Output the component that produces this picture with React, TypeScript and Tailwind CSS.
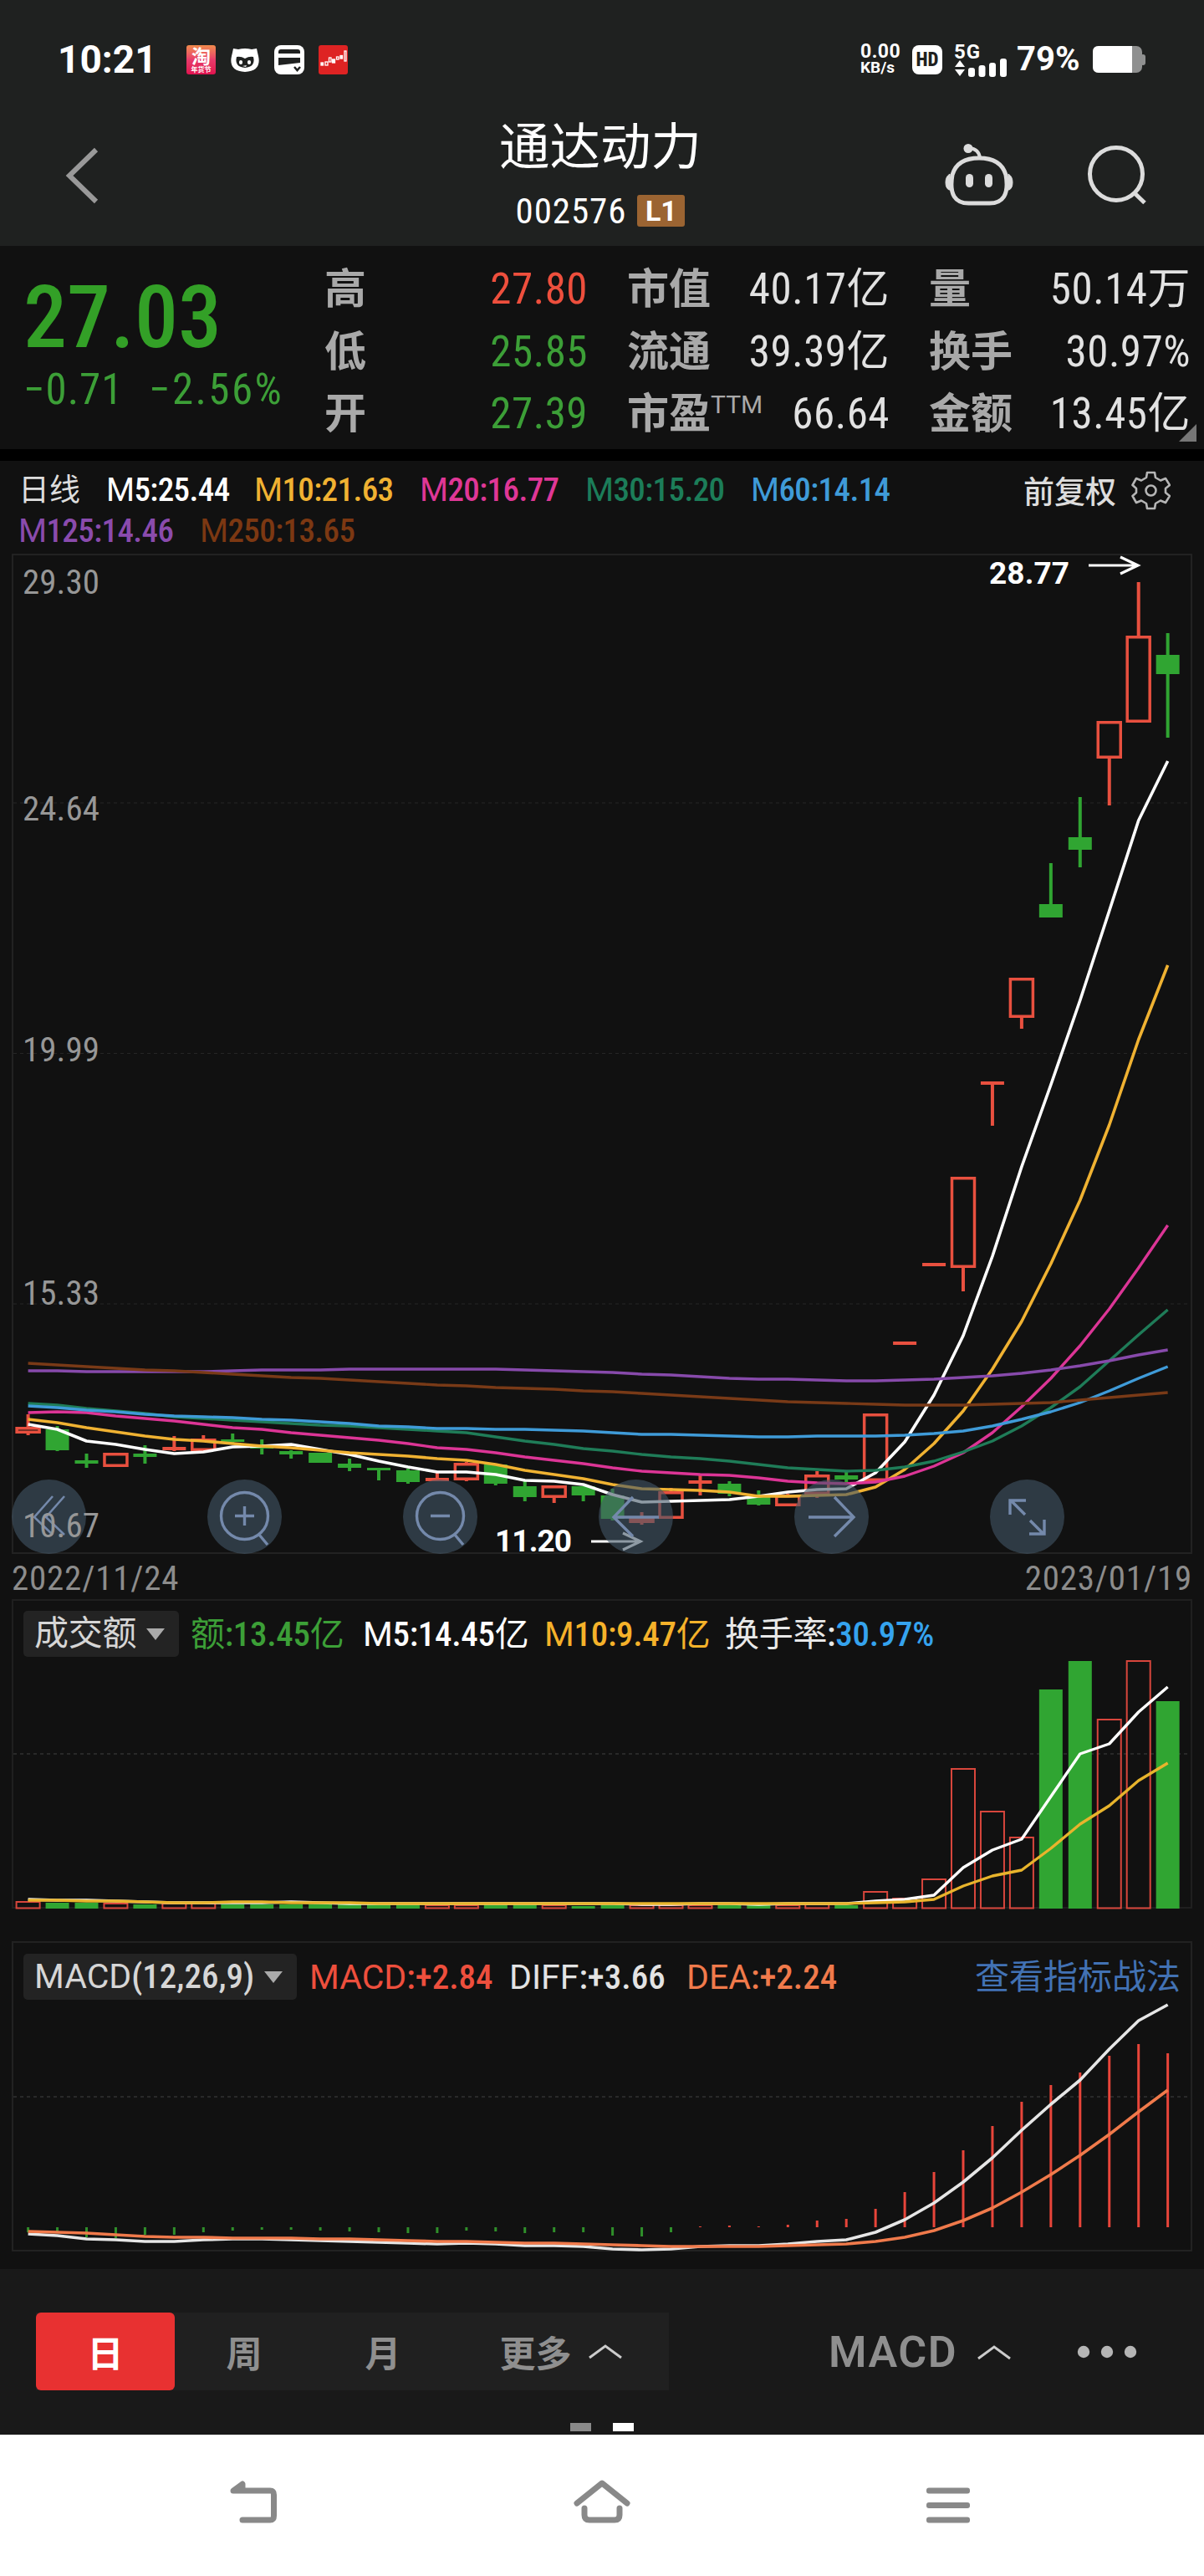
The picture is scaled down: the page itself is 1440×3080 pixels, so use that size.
import { ReactNode } from 'react';

const RED = '#e8503f';
const GREEN = '#30a532';

// x centre of the n-th trading day
const X0 = 33.6;
const STEP = 34.95;
const cx = (i: number) => X0 + i * STEP;

// [high, bodyTop, bodyBottom, low, up?]
type Candle = [number, number, number, number, boolean];

const candles: Candle[] = [
  [1691, 1706, 1714, 1716, true],
  [1705, 1709, 1734, 1735, false],
  [1738, 1746, 1750, 1755, false],
  [1737, 1737, 1754, 1754, true],
  [1728, 1738, 1742, 1750, false],
  [1717, 1730, 1734, 1735, true],
  [1716, 1720, 1735, 1735, true],
  [1714, 1721, 1723, 1725, false],
  [1721, 1729, 1730, 1739, false],
  [1734, 1735, 1739, 1744, false],
  [1737, 1737, 1749, 1749, false],
  [1744, 1750, 1755, 1759, false],
  [1755, 1755, 1758, 1770, false],
  [1756, 1758, 1772, 1774, false],
  [1760, 1767, 1771, 1771, true],
  [1748, 1749, 1770, 1771, true],
  [1751, 1751, 1774, 1776, false],
  [1771, 1777, 1790, 1795, false],
  [1776, 1776, 1791, 1797, true],
  [1777, 1777, 1788, 1795, false],
  [1780, 1788, 1816, 1818, false],
  [1808, 1814, 1821, 1823, true],
  [1779, 1783, 1816, 1816, true],
  [1762, 1770, 1774, 1788, true],
  [1771, 1774, 1786, 1789, false],
  [1782, 1789, 1799, 1800, false],
  [1786, 1787, 1801, 1801, true],
  [1759, 1763, 1787, 1791, true],
  [1760, 1764, 1769, 1772, false],
  [1690, 1690, 1771, 1771, true],
  [1604, 1604, 1608, 1608, true],
  [1510, 1510, 1514, 1514, true],
  [1407, 1407, 1516, 1544, true],
  [1293, 1293, 1297, 1346, true],
  [1169, 1169, 1217, 1230, true],
  [1032, 1081, 1097, 1097, false],
  [953, 1001, 1016, 1037, false],
  [862, 862, 907, 963, true],
  [696, 760, 864, 864, true],
  [757, 783, 806, 882, false],
];

const ma5 = [
  1703, 1709, 1723, 1727, 1733, 1738, 1736, 1730, 1729, 1727, 1733, 1739, 1747, 1754, 1760, 1760, 1763, 1770, 1771, 1775,
  1787, 1796, 1795, 1794, 1793, 1789, 1784, 1781, 1780, 1761, 1724, 1668, 1597, 1502, 1395, 1297, 1196, 1089, 981, 910,
];
const ma10 = [
  1697, 1701, 1707, 1712, 1717, 1721, 1723, 1726, 1729, 1731, 1734, 1737, 1739, 1741, 1744, 1746, 1751, 1758, 1763, 1768,
  1775, 1780, 1781, 1782, 1784, 1789, 1789, 1788, 1787, 1778, 1757, 1726, 1687, 1637, 1580, 1511, 1435, 1345, 1243, 1154,
];
const ma20 = [
  1689, 1688, 1689, 1693, 1696, 1699, 1703, 1707, 1709, 1713, 1716, 1719, 1722, 1726, 1731, 1733, 1737, 1742, 1746, 1750,
  1755, 1759, 1761, 1763, 1764, 1767, 1771, 1773, 1774, 1772, 1765, 1753, 1737, 1713, 1682, 1648, 1609, 1565, 1516, 1465,
];
const ma30 = [
  1678, 1680, 1684, 1687, 1690, 1694, 1696, 1698, 1700, 1702, 1704, 1705, 1707, 1709, 1711, 1713, 1718, 1723, 1727, 1732,
  1735, 1739, 1742, 1744, 1747, 1751, 1755, 1757, 1759, 1758, 1754, 1747, 1736, 1723, 1705, 1683, 1658, 1627, 1596, 1566,
];
const ma60 = [
  1681, 1683, 1686, 1688, 1691, 1693, 1694, 1695, 1697, 1698, 1700, 1702, 1705, 1706, 1708, 1708, 1709, 1709, 1710, 1711,
  1713, 1715, 1715, 1716, 1717, 1718, 1718, 1717, 1717, 1717, 1716, 1714, 1711, 1705, 1697, 1688, 1677, 1663, 1648, 1634,
];
const ma125 = [
  1639, 1639, 1640, 1640, 1640, 1640, 1640, 1639, 1638, 1638, 1638, 1637, 1637, 1637, 1637, 1637, 1637, 1638, 1639, 1640,
  1641, 1643, 1644, 1646, 1648, 1649, 1649, 1650, 1651, 1651, 1650, 1649, 1647, 1645, 1642, 1638, 1633, 1627, 1620, 1614,
];
const ma250 = [
  1630, 1632, 1634, 1636, 1638, 1639, 1641, 1643, 1645, 1647, 1648, 1650, 1652, 1654, 1656, 1657, 1659, 1660, 1661, 1663,
  1664, 1666, 1668, 1670, 1672, 1674, 1676, 1677, 1678, 1679, 1680, 1680, 1680, 1679, 1678, 1677, 1674, 1671, 1668, 1665,
];

const volumeTops = [
  2274, 2275, 2275, 2276, 2277, 2276, 2276, 2277, 2277, 2277, 2277, 2277, 2277, 2277, 2278, 2278, 2277, 2277, 2278, 2279,
  2278, 2278, 2278, 2278, 2278, 2278, 2278, 2277, 2278, 2262, 2270, 2247, 2115, 2166, 2197, 2020, 1986, 2056, 1986, 2034,
];
const volMa5 = [
  2271, 2272, 2272, 2273, 2274, 2275, 2275, 2275, 2275, 2274, 2275, 2276, 2276, 2276, 2276, 2276, 2276, 2276, 2276, 2276,
  2276, 2277, 2277, 2276, 2276, 2277, 2276, 2276, 2276, 2273, 2271, 2266, 2233, 2212, 2199, 2148, 2097, 2085, 2047, 2017,
];
const volMa10 = [
  2272, 2272, 2273, 2273, 2274, 2275, 2275, 2274, 2274, 2275, 2275, 2275, 2276, 2276, 2276, 2276, 2276, 2276, 2276, 2276,
  2276, 2276, 2276, 2276, 2276, 2276, 2276, 2276, 2276, 2275, 2274, 2271, 2255, 2243, 2236, 2210, 2181, 2159, 2129, 2108,
];

const macdEnds = [
  2669, 2670, 2675, 2676, 2672, 2672, 2669, 2667, 2666, 2666, 2667, 2668, 2669, 2670, 2670, 2667, 2668, 2670, 2669, 2669,
  2673, 2674, 2669, 2662, 2661, 2662, 2660, 2655, 2653, 2641, 2621, 2597, 2571, 2542, 2513, 2493, 2478, 2458, 2444, 2455,
];
const diff = [
  2671, 2673, 2677, 2678, 2680, 2680, 2678, 2677, 2677, 2678, 2679, 2680, 2681, 2682, 2683, 2682, 2683, 2685, 2685, 2686,
  2689, 2690, 2689, 2686, 2685, 2685, 2683, 2680, 2678, 2669, 2654, 2634, 2609, 2580, 2547, 2516, 2487, 2450, 2416, 2397,
];
const dea = [
  2668, 2669, 2670, 2672, 2674, 2675, 2675, 2676, 2676, 2676, 2677, 2677, 2678, 2679, 2680, 2680, 2681, 2682, 2682, 2683,
  2684, 2685, 2686, 2686, 2686, 2686, 2685, 2684, 2683, 2680, 2675, 2667, 2655, 2640, 2621, 2600, 2577, 2552, 2525, 2499,
];

function Line({ ys, color, width = 3 }: { ys: number[]; color: string; width?: number }) {
  return (
    <polyline
      points={ys.map((y, i) => `${cx(i)},${y}`).join(' ')}
      fill="none"
      stroke={color}
      strokeWidth={width}
      strokeLinejoin="round"
    />
  );
}

function CandleShape({ data, i }: { data: Candle; i: number }) {
  const [high, top, bottom, low, up] = data;
  const x = cx(i);
  const h = Math.max(bottom - top, 3);
  const color = up ? RED : GREEN;
  return (
    <g fill={color}>
      {high < top && <rect x={x - 2} y={high} width={4} height={top - high} />}
      {low > bottom && <rect x={x - 2} y={bottom} width={4} height={low - bottom} />}
      {up && h > 6 ? (
        <rect x={x - 13.5} y={top + 1.75} width={27} height={h - 3.5} fill="none" stroke={color} strokeWidth={3.5} />
      ) : (
        <rect x={x - 14} y={top} width={28} height={h} />
      )}
    </g>
  );
}

function StatusBar() {
  return (
    <div className="flex h-[142px] items-center pl-[69px] pr-[70px] text-white">
      <span className="w-[154px] font-['Roboto'] text-[46px] font-bold leading-none">10:21</span>
      <div className="flex items-center gap-[17px]">
        <div className="flex h-[35px] w-[35px] flex-col items-center rounded-[3px] bg-linear-to-b from-[#f08a4b] via-[#e83a6a] to-[#e0104f] font-['Noto_Sans_CJK_SC'] font-bold">
          <span className="text-[23px] leading-[24px]">淘</span>
          <span className="text-[8px] leading-[9px] whitespace-nowrap">年货节</span>
        </div>
        <svg width="36" height="35" viewBox="0 0 36 35">
          <path d="M4 4 L10 5 Q18 3 26 5 L32 4 Q33 9 34 13 Q38 31 18 32 Q-2 31 2 13 Q3 9 4 4Z" fill="#fff" />
          <path d="M8 14 Q13 13 18 16 Q23 13 28 14 Q31 26 18 27 Q5 26 8 14Z" fill="#1f2120" />
          <rect x="11" y="18" width="4" height="5" rx="2" fill="#fff" />
          <rect x="21" y="18" width="4" height="5" rx="2" fill="#fff" />
          <path d="M15 25 l5 -1 l-1 2z" fill="#fff" />
        </svg>
        <svg width="36" height="35" viewBox="0 0 36 35">
          <rect width="36" height="35" rx="8" fill="#fff" />
          <path d="M5 10 V8 Q5 5 8 5 H28 Q31 5 31 8 V10Z" fill="#1f2120" />
          <path d="M5 15 H31 V21 L5 24Z" fill="#1f2120" />
          <path d="M24 26 l3.5 4 l3.5 -4" fill="none" stroke="#1f2120" strokeWidth="2.5" />
        </svg>
        <svg width="35" height="35" viewBox="0 0 35 35">
          <rect width="35" height="35" rx="3" fill="#de2323" />
          <g stroke="#fff" strokeWidth="1.3" fill="#fff">
            <rect x="3" y="21" width="2.5" height="3" />
            <rect x="8" y="20" width="3" height="4" fill="none" />
            <rect x="12.5" y="15" width="2.5" height="5" fill="none" />
            <rect x="16.5" y="17" width="3" height="4" />
            <rect x="21.5" y="14" width="2.5" height="3" fill="none" />
            <rect x="26" y="12.5" width="2.5" height="3.5" />
            <rect x="31" y="7" width="2" height="12" fill="none" />
          </g>
        </svg>
      </div>
      <div className="flex-1" />
      <div className="flex w-[62px] flex-col font-['Roboto'] font-bold">
        <span className="text-[23px] leading-[20px] tracking-[0.5px]">0.00</span>
        <span className="text-[19px] leading-[18px]">KB/s</span>
      </div>
      <div className="mr-[14px] flex h-[35px] w-[36px] items-center justify-center rounded-[8px] bg-white font-['Roboto_Condensed'] text-[23px] font-extrabold leading-none text-[#1f2120]">
        HD
      </div>
      <svg width="66" height="44" viewBox="0 0 66 44" className="mr-[9px] mb-[3px]">
        <text x="0" y="21.5" className="font-['Roboto'] font-bold" fontSize="24" textLength="31" fill="#fff">5G</text>
        <g fill="#fff">
          <path d="M7 24 l6 8 h-12z M1 35 h12 l-6 8z" />
          <rect x="17" y="33" width="8" height="11" rx="3" />
          <rect x="29.5" y="30" width="8" height="14" rx="3" />
          <rect x="42" y="27" width="8" height="17" rx="3" />
          <rect x="55" y="22" width="8" height="22" rx="3" />
        </g>
      </svg>
      <span className="mr-[8px] w-[83px] font-['Roboto'] text-[40px] font-bold leading-none">79%</span>
      <svg width="63" height="32" viewBox="0 0 63 32">
        <rect width="59" height="32" rx="7" fill="#8f9090" />
        <rect x="57" y="10" width="6" height="13" rx="3" fill="#8f9090" />
        <path d="M7 0 H47 V32 H7 Q0 32 0 25 V7 Q0 0 7 0Z" fill="#fff" />
      </svg>
    </div>
  );
}

function TitleBar() {
  return (
    <div className="flex h-[152px] items-start pr-[68px] pl-[76px]">
      <svg width="42" height="72" viewBox="0 0 42 72" className="mt-[32px]">
        <path d="M39 5 L7 36 L39 67" fill="none" stroke="#999" strokeWidth="6" />
      </svg>
      <div className="ml-[475px] flex w-[250px] flex-col items-center text-white">
        <h1 className="font-['Noto_Sans_CJK_SC'] text-[60.5px] leading-[58px]">通达动力</h1>
        <div className="mt-[33px] flex items-center gap-[13px]">
          <span className="font-['Roboto_Condensed'] text-[43px] leading-[38px] tracking-[0.9px]">002576</span>
          <span className="flex h-[38px] w-[57px] items-center justify-center rounded-[3px] bg-[#9b6432] font-['Roboto'] text-[34px] font-bold leading-none">
            L1
          </span>
        </div>
      </div>
      <div className="flex-1" />
      <svg width="82" height="74" viewBox="0 0 82 74" className="mt-[30px] mr-[88px]" fill="none" stroke="#dcdcdc">
        <path d="M41 17 Q67 17 73 37 Q79 72 52 71 H30 Q3 72 9 37 Q15 17 41 17Z" strokeWidth="5" />
        <path d="M42 17 Q41 6 29 5" strokeWidth="4" />
        <circle cx="28" cy="5.5" r="5.5" fill="#dcdcdc" stroke="none" />
        <rect x="25" y="36" width="9" height="16" rx="4.5" fill="#dcdcdc" stroke="none" />
        <rect x="48" y="36" width="9" height="16" rx="4.5" fill="#dcdcdc" stroke="none" />
        <path d="M6 36 Q1 39 1 46 Q1 53 5 55 L7 55 L6 36Z M76 36 Q81 39 81 46 Q81 53 77 55 L75 55Z" fill="#dcdcdc" strokeWidth="1" />
      </svg>
      <svg width="72" height="72" viewBox="0 0 72 72" className="mt-[31px]" fill="none" stroke="#dcdcdc" strokeWidth="5">
        <circle cx="35" cy="35" r="31.5" />
        <path d="M57 58 L69 69.5" />
      </svg>
    </div>
  );
}

const stats: { label: ReactNode; value: string; color: string }[][] = [
  [
    { label: '高', value: '27.80', color: 'text-[#ee4f3d]' },
    { label: '市值', value: '40.17亿', color: 'text-[#e2e2e2]' },
    { label: '量', value: '50.14万', color: 'text-[#e2e2e2]' },
  ],
  [
    { label: '低', value: '25.85', color: 'text-[#3c9f37]' },
    { label: '流通', value: '39.39亿', color: 'text-[#e2e2e2]' },
    { label: '换手', value: '30.97%', color: 'text-[#e2e2e2]' },
  ],
  [
    { label: '开', value: '27.39', color: 'text-[#3c9f37]' },
    {
      label: (
        <>
          市盈<span className="self-start font-['Roboto'] text-[30px] font-normal leading-[28px]">TTM</span>
        </>
      ),
      value: '66.64',
      color: 'text-[#e2e2e2]',
    },
    { label: '金额', value: '13.45亿', color: 'text-[#e2e2e2]' },
  ],
];

function Quote() {
  return (
    <section className="relative flex h-[243px] bg-[#111] font-['Roboto_Condensed','Noto_Sans_CJK_SC',sans-serif]">
      <div className="flex w-[388px] flex-col pl-[28px] pt-[34px] text-[#33a027]">
        <span className="text-[104px] font-medium leading-[104px]">27.03</span>
        <div className="mt-[8px] flex text-[51px] leading-[51px] text-[#3c9f37]">
          <span className="w-[150px] tracking-[1px]">−0.71</span>
          <span className="tracking-[2.4px]">−2.56%</span>
        </div>
      </div>
      <div className="grid grid-cols-[315px_47px_314px_47px_313px] content-start pt-[15px]">
        {stats.map((row, r) =>
          row.map((s, c) => (
            <div
              key={`${r}-${c}`}
              className="flex h-[74.5px] items-center justify-between text-[51px] leading-[74px]"
              style={{ gridColumn: c * 2 + 1 }}
            >
              <span className="flex h-[50px] items-center text-[50px] font-bold leading-[50px] text-[#a9a9a9]">{s.label}</span>
              <span className={`${s.color} tracking-[0.5px]`}>{s.value}</span>
            </div>
          ))
        )}
      </div>
      <svg width="21" height="21" viewBox="0 0 21 21" className="absolute right-[9px] bottom-[9px]">
        <path d="M21 0 V21 H0Z" fill="#777" />
      </svg>
    </section>
  );
}

function Ma({ name, value, className }: { name: string; value: string; className: string }) {
  return (
    <span className={className}>
      <span className="font-['Roboto'] font-normal">M</span>
      {name}:{value}
    </span>
  );
}

function MaLegend() {
  return (
    <div className="flex h-[111px] items-start justify-between pl-[22px] pr-[40px] pt-[11px] font-['Roboto_Condensed','Noto_Sans_CJK_SC',sans-serif] text-[39px] font-medium leading-[49px] tracking-[-0.6px]">
      <div>
        <div className="flex">
          <span className="w-[105px] text-[37px] font-normal tracking-normal text-[#ddd]">日线</span>
          <Ma name="5" value="25.44" className="w-[177px] text-white" />
          <Ma name="10" value="21.63" className="w-[198px] text-[#f0b232]" />
          <Ma name="20" value="16.77" className="w-[198px] text-[#df3796]" />
          <Ma name="30" value="15.20" className="w-[198px] text-[#1c7d59]" />
          <Ma name="60" value="14.14" className="w-[198px] text-[#3f9bd8]" />
        </div>
        <div className="flex">
          <Ma name="125" value="14.46" className="w-[217px] text-[#8a4bad]" />
          <Ma name="250" value="13.65" className="text-[#7c3812]" />
        </div>
      </div>
      <div className="flex items-center gap-[18px] text-[37px] tracking-normal text-[#ddd]">
        <span className="font-['Noto_Sans_CJK_SC'] font-medium">前复权</span>
        <svg width="47" height="47" viewBox="0 0 47 47" fill="none" stroke="#b5b5b5" strokeWidth="2.6" strokeLinejoin="round">
          <path d="M19 2 H28 L29 8 L35 11.5 L41 9 L46 17 L41 21 V26 L46 30 L41 38 L35 35.5 L29 39 L28 45 H19 L18 39 L12 35.5 L6 38 L1.5 30 L6 26 V21 L1.5 17 L6 9 L12 11.5 L18 8Z" />
          <circle cx="23.5" cy="23.5" r="6" />
        </svg>
      </div>
    </div>
  );
}

function ToolButton({ children }: { children: ReactNode }) {
  return (
    <button className="h-[89px] w-[89px] rounded-full bg-[#435768]/60">
      <svg width="89" height="89" viewBox="0 0 89 89" fill="none" stroke="#7489ab" strokeWidth="3.4">
        {children}
      </svg>
    </button>
  );
}

function PriceChart() {
  const labels: [number, string][] = [[710, '29.30'], [981, '24.64'], [1269, '19.99'], [1560, '15.33'], [1838, '10.67']];
  return (
    <div className="relative mx-[14px] h-[1196px] border-2 border-[#222]">
      <svg width="1408" height="1192" viewBox="16 664 1408 1192" className="block overflow-visible">
        {[960, 1259.5, 1559].map((y) => (
          <line key={y} x1="16" x2="1424" y1={y} y2={y} stroke="#262626" strokeWidth="1.2" strokeDasharray="4 4" />
        ))}
        {candles.map((c, i) => (
          <CandleShape key={i} data={c} i={i} />
        ))}
        <Line ys={ma5} color="#fff" width={3.6} />
        <Line ys={ma10} color="#f0b232" width={3.6} />
        <Line ys={ma20} color="#dc3596" width={3.4} />
        <Line ys={ma30} color="#1f7c58" width={3.4} />
        <Line ys={ma60} color="#3f9bd8" width={3.4} />
        <Line ys={ma125} color="#874aab" width={3.4} />
        <Line ys={ma250} color="#793a17" width={3.4} />
        <g className="font-['Roboto'] font-bold" fontSize="37" fill="#fff">
          <text x="1183" y="698" textLength="96">28.77</text>
          <text x="592" y="1855" textLength="92">11.20</text>
        </g>
        <g fill="none" stroke="#fff" strokeWidth="3.2">
          <path d="M1302 676 H1361 M1340 666 L1361 676 L1340 686" />
          <path d="M707 1843 H766 M745 1833 L766 1843 L745 1853" />
        </g>
      </svg>
      <div className="absolute bottom-[-2px] left-[-2px] flex gap-[145px]">
        <ToolButton>
          <path d="M49 20 L27 45 L49 66 M63 20 L41 45 L63 66" strokeWidth="2.6" />
        </ToolButton>
        <ToolButton>
          <circle cx="44.5" cy="43.5" r="28" />
          <path d="M44.5 32 V55 M33 43.5 H56 M62 66 L72 78" />
        </ToolButton>
        <ToolButton>
          <circle cx="44.5" cy="43.5" r="28" />
          <path d="M33 43.5 H56 M62 66 L72 78" />
        </ToolButton>
        <ToolButton>
          <path d="M18 45 H72 M41 21 L18 45 L41 68" />
        </ToolButton>
        <ToolButton>
          <path d="M17 45 H71 M48 21 L71 45 L48 68" />
        </ToolButton>
        <ToolButton>
          <path d="M24 42 V25 H43 M25 25 L42 42 M65 48 V65 H47 M64 65 L48 49" />
        </ToolButton>
      </div>
      {/* price scale stays readable above the round buttons */}
      <svg width="140" height="1192" viewBox="16 664 140 1192" className="pointer-events-none absolute top-0 left-0">
        <g className="font-['Roboto_Condensed']" fontSize="41" fill="#979797">
          {labels.map(([y, t]) => (
            <text key={t} x="27" y={y} textLength="92">{t}</text>
          ))}
        </g>
      </svg>
    </div>
  );
}

function Chip({ children }: { children: ReactNode }) {
  return (
    <button className="flex h-[55px] items-center justify-between rounded-[5px] bg-[#232323] pr-[17px] pl-[13px] text-[#d6d6d6]">
      {children}
      <svg width="22" height="14" viewBox="0 0 22 14">
        <path d="M0 0 H22 L11 14Z" fill="#aaa" />
      </svg>
    </button>
  );
}

function VolumePanel() {
  return (
    <div className="mx-[14px] h-[370px] border-2 border-[#1f1f1f] font-['Roboto_Condensed','Noto_Sans_CJK_SC',sans-serif] text-[41px] leading-[57px] tracking-[-0.3px]">
      <div className="grid h-[70px] grid-cols-[186px_207px_217px_217px_auto] items-start pl-[12px] pt-[12px] font-medium whitespace-nowrap">
        <Chip>
          <span className="font-normal">成交额</span>
        </Chip>
        <span className="pl-[14px] text-[#3c9f37]"><span className="font-normal">额</span>:13.45<span className="font-normal">亿</span></span>
        <span className="pl-[13px] text-white"><span className="font-['Roboto'] font-normal">M</span>5:14.45<span className="font-normal">亿</span></span>
        <span className="pl-[13px] text-[#f5b22a]"><span className="font-['Roboto'] font-normal">M</span>10:9.47<span className="font-normal">亿</span></span>
        <span className="pl-[12px] text-[#e8e8e8]"><span className="font-normal">换手率</span>:<span className="text-[#35a3ee]">30.97%</span></span>
      </div>
      <svg width="1408" height="296" viewBox="16 1984 1408 296" className="block overflow-visible">
        <line x1="16" x2="1424" y1="2097" y2="2097" stroke="#292929" strokeWidth="2" strokeDasharray="4 4" />
        {volumeTops.map((y, i) =>
          candles[i][4] ? (
            <rect key={i} x={cx(i) - 14} y={y} width={28} height={2281.5 - y} fill="none" stroke="#d8463c" strokeWidth={2} />
          ) : (
            <rect key={i} x={cx(i) - 14} y={y} width={28} height={2282 - y} fill={GREEN} />
          )
        )}
        <Line ys={volMa5} color="#fff" width={3.4} />
        <Line ys={volMa10} color="#e8b42c" width={3.4} />
      </svg>
    </div>
  );
}

function MacdPanel() {
  return (
    <div className="mx-[14px] mt-[39px] h-[371px] border-2 border-[#222] font-['Roboto_Condensed','Noto_Sans_CJK_SC',sans-serif] text-[41px] leading-[57px]">
      <div className="grid h-[70px] grid-cols-[327px_238px_212px_220px_auto] items-start pl-[12px] pt-[13px] font-medium whitespace-nowrap">
        <Chip>
          <span><span className="font-['Roboto'] font-normal">MACD</span>(12,26,9)</span>
        </Chip>
        <span className="pl-[15px] text-[#ee4f3d]"><span className="font-['Roboto'] font-normal">MACD</span>:+2.84</span>
        <span className="pl-[16px] text-[#e3e3e3]"><span className="font-['Roboto'] font-normal">DIFF</span>:+3.66</span>
        <span className="pl-[16px] text-[#f07a4b]"><span className="font-['Roboto'] font-normal">DEA</span>:+2.24</span>
        <a className="pr-[12px] text-right text-[41px] font-normal text-[#4272b4]">查看指标战法</a>
      </div>
      <svg width="1408" height="297" viewBox="16 2393 1408 297" className="block overflow-visible">
        <line x1="16" x2="1424" y1="2507" y2="2507" stroke="#292929" strokeWidth="2" strokeDasharray="4 4" />
        {macdEnds.map((y, i) => (
          <rect
            key={i}
            x={cx(i) - 1.5}
            y={Math.min(y, 2663)}
            width={3}
            height={Math.abs(y - 2663)}
            fill={i < 23 ? '#2f8f2a' : '#e8453a'}
          />
        ))}
        <Line ys={diff} color="#e6e6e6" width={3.6} />
        <Line ys={dea} color="#f07a4b" width={3.6} />
      </svg>
    </div>
  );
}

function Caret() {
  return (
    <svg width="40" height="18" viewBox="0 0 40 18">
      <path d="M1 16 L20 2 L39 16" fill="none" stroke="#ccc" strokeWidth="3" />
    </svg>
  );
}

function BottomTabs() {
  return (
    <div className="flex h-[198px] flex-col bg-[#191919] pt-[52px] font-['Noto_Sans_CJK_SC'] text-[43px] font-bold leading-none text-[#8f8f8f]">
      <div className="flex h-[93px] items-center pl-[43px] pr-[80px]">
        <div className="flex h-full w-[757px] items-center bg-[#202020]">
          <button className="h-full w-[166px] rounded-[6px] bg-[#e83131] text-white">日</button>
          <button className="w-[166px]">周</button>
          <button className="w-[166px]">月</button>
          <button className="flex flex-1 items-center justify-center gap-[20px]">
            更多
            <Caret />
          </button>
        </div>
        <button className="ml-[191px] flex w-[218px] items-center justify-between pt-[2px] font-['Roboto'] text-[52px] font-semibold tracking-[1.5px]">
          MACD
          <Caret />
        </button>
        <svg width="72" height="16" viewBox="0 0 72 16" className="ml-auto" fill="#b5b5b5">
          <circle cx="8" cy="8" r="7.2" />
          <circle cx="36" cy="8" r="7.2" />
          <circle cx="64" cy="8" r="7.2" />
        </svg>
      </div>
      <div className="mt-[39px] flex justify-center gap-[26px]">
        <span className="h-[10px] w-[25px] bg-[#8a8a8a]" />
        <span className="h-[10px] w-[25px] bg-white" />
      </div>
    </div>
  );
}

function SystemNav() {
  return (
    <nav className="flex h-[169px] items-start justify-between bg-white pl-[273px] pr-[279px] pt-[53px]">
      <svg width="60" height="56" viewBox="0 0 60 56" fill="none" stroke="#898989" strokeWidth="7" strokeLinecap="round" strokeLinejoin="round">
        <path d="M17 49 H50 Q54.500 49 54.500 44 V19 Q54.500 14 50 14 H6 L17 6 V12" />
      </svg>
      <svg width="70" height="56" viewBox="0 0 70 56" fill="none" stroke="#898989" strokeWidth="7" strokeLinecap="round" strokeLinejoin="round">
        <path d="M5 29 L35 5 L65 29 M14 35 V43 Q14 49 20 49 H50 Q56 49 56 43 V35" />
      </svg>
      <svg width="54" height="56" viewBox="0 0 54 56" fill="#898989">
        <rect x="1" y="10.500" width="52" height="7" rx="3" />
        <rect x="1" y="28" width="52" height="7" rx="3" />
        <rect x="1" y="45.500" width="52" height="7" rx="3" />
      </svg>
    </nav>
  );
}

export default function App() {
  return (
    <div className="w-[1440px] bg-[#111]">
      <header className="bg-[#1f2120]">
        <StatusBar />
        <TitleBar />
      </header>
      <Quote />
      <div className="h-[14px] bg-black" />
      <main className="h-[2162px]">
        <MaLegend />
        <PriceChart />
        <div className="flex h-[54px] justify-between px-[14px] pt-[2px] font-['Roboto_Condensed'] text-[41px] leading-[54px] tracking-[0.8px] text-[#8c8c8c]">
          <span>2022/11/24</span>
          <span>2023/01/19</span>
        </div>
        <VolumePanel />
        <MacdPanel />
      </main>
      <BottomTabs />
      <SystemNav />
    </div>
  );
}
